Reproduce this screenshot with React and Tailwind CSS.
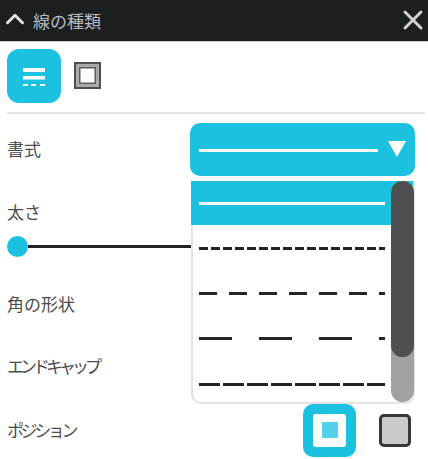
import React from 'react';
import { ChevronUp, X } from 'lucide-react';

const labelClass = 'text-[17px] leading-6 text-[#4a4c4d]';

function DashLine({ pattern }) {
  return (
    <svg width="186" height="3" className="block">
      <line x1="0" y1="1.5" x2="186" y2="1.5" stroke="#222526" strokeWidth="3" strokeDasharray={pattern} />
    </svg>
  );
}

function Row({ label, tight, className, children }) {
  return (
    <div className={`flex items-center justify-between ${className}`}>
      <span className={`${labelClass} ${tight}`}>{label}</span>
      {children}
    </div>
  );
}

export default function App() {
  return (
    <div className="relative h-[459px] w-[428px] overflow-hidden bg-white font-['Noto_Sans_CJK_JP','Noto_Sans',sans-serif]">
      {/* Header */}
      <div className="flex h-[42px] items-center justify-between border-b border-[#c9cbcb] bg-[#1b1f20]">
        <div className="flex items-center gap-[3px]">
          <ChevronUp size={30} strokeWidth={2.4} className="-mt-[3px] text-[#e4e4e4]" />
          <span className="text-[17px] leading-6 text-[#b9bcc0]">線の種類</span>
        </div>
        <X size={32} strokeWidth={2.2} className="-mt-[2px] mr-[-1px] text-[#d2d2d2]" />
      </div>

      {/* Tool buttons */}
      <div className="ml-[7px] mr-[3px] flex h-[72px] items-center gap-[13px] border-b-2 border-[#e6e6e6] pb-[3px]">
        <div className="flex h-[54px] w-[54px] items-center justify-center rounded-[12px] bg-[#1dc1e0]">
          <svg width="22" height="18" viewBox="0 0 22 18" fill="none" className="mt-[2px]">
            <rect x="0" y="0" width="22" height="4" fill="#fff" />
            <rect x="0" y="8" width="22" height="3.5" fill="#fff" />
            <rect x="0" y="16" width="5" height="2" fill="#fff" />
            <rect x="8" y="16" width="5" height="2" fill="#fff" />
            <rect x="17" y="16" width="5" height="2" fill="#fff" />
          </svg>
        </div>
        <svg width="27" height="27" viewBox="0 0 27 27" fill="none">
          <rect x="1" y="1" width="25" height="25" stroke="#4d4f50" strokeWidth="2" />
          <rect x="2" y="2" width="23" height="23" fill="#a9abab" />
          <rect x="5.75" y="5.75" width="15.5" height="15.5" fill="#fff" stroke="#5a5c5d" strokeWidth="1.5" />
        </svg>
      </div>

      <div className="pl-[7px] pr-[13px]">
        <Row label="書式" className="mt-[8px] h-[54px]">
          <div className="flex h-[53px] w-[225px] items-center rounded-[10px] bg-[#1dc1e0] pl-[9px] pr-[9px]">
            <div className="mt-[3px] h-[3px] w-[179px] bg-white" />
            <svg width="18" height="16" viewBox="0 0 18 16" className="ml-auto">
              <polygon points="0,0 18,0 9,16" fill="#fff" />
            </svg>
          </div>
        </Row>

        {/* Slider */}
        <div className="mt-[24px]">
          <span className={`block ${labelClass}`}>太さ</span>
          <div className="mt-[11px] flex h-[22px] items-center">
            <div className="h-[21px] w-[21px] shrink-0 rounded-full bg-[#1dc1e0]" />
            <div className="h-[3px] flex-1 bg-[#222526]" />
          </div>
        </div>

        <Row label="角の形状" className="mt-[35px] h-[24px]" />
        <Row label="エンドキャップ" tight="tracking-[-4px]" className="mt-[38px] h-[24px]" />

        <Row label="ポジション" tight="tracking-[-3.4px]" className="mt-[25px] h-[54px]">
          <div className="flex items-center gap-[23px] pr-[4px]">
            <div className="flex h-[53px] w-[53px] items-center justify-center rounded-[10px] bg-[#1dc1e0]">
              <div className="flex h-[33px] w-[33px] items-center justify-center rounded-[3px] bg-white">
                <div className="h-[16px] w-[16px] bg-[#54d0e8]" />
              </div>
            </div>
            <div className="h-[33px] w-[32px] rounded-[5px] border-[3px] border-[#353738] bg-[#c9cbca]" />
          </div>
        </Row>
      </div>

      {/* Open dropdown */}
      <div className="absolute left-[191px] top-[181px] h-[223px] w-[224px] rounded-b-[10px] border-x-2 border-b-2 border-[#e3e3e3] bg-white">
        <div className="-ml-[2px] flex h-[44px] items-center bg-[#1dc1e0] pl-[8px]">
          <div className="h-[3px] w-[186px] bg-white" />
        </div>
        <div className="pl-[6px]">
          <div className="mt-[22px]"><DashLine pattern="9 3" /></div>
          <div className="mt-[42px]"><DashLine pattern="18 12" /></div>
          <div className="mt-[42px]"><DashLine pattern="33 27" /></div>
          <div className="mt-[43px]"><DashLine pattern="21 3" /></div>
        </div>
        {/* Scrollbar */}
        <div className="absolute -right-[1px] bottom-0 top-0 w-[23px] rounded-full bg-[#a0a1a3]">
          <div className="h-[176px] rounded-full bg-[#4d4f50]" />
        </div>
      </div>
    </div>
  );
}
